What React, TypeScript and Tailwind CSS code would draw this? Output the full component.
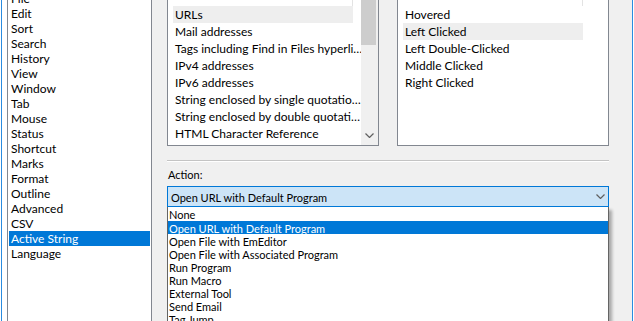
const sections = [
  'File',
  'Edit',
  'Sort',
  'Search',
  'History',
  'View',
  'Window',
  'Tab',
  'Mouse',
  'Status',
  'Shortcut',
  'Marks',
  'Format',
  'Outline',
  'Advanced',
  'CSV',
  'Active String',
  'Language',
];

const kinds = [
  'URLs',
  'Mail addresses',
  'Tags including Find in Files hyperli…',
  'IPv4 addresses',
  'IPv6 addresses',
  'String enclosed by single quotatio…',
  'String enclosed by double quotati…',
  'HTML Character Reference',
];

const events = ['Hovered', 'Left Clicked', 'Left Double-Clicked', 'Middle Clicked', 'Right Clicked'];

const actions = [
  'None',
  'Open URL with Default Program',
  'Open File with EmEditor',
  'Open File with Associated Program',
  'Run Program',
  'Run Macro',
  'External Tool',
  'Send Email',
  'Tag Jump',
];

function Chevron({ className }: { className?: string }) {
  return (
    <svg width="9" height="5" viewBox="0 0 9 5" className={className}>
      <path d="M0.5 0.5 L4.5 4.5 L8.5 0.5" fill="none" stroke="#606060" strokeWidth="1.2" />
    </svg>
  );
}

export default function App() {
  return (
    <div className="flex h-[321px] w-[634px] overflow-hidden bg-[#f0f0f0] font-['Lato',sans-serif] text-[12px] leading-none text-black">
      <div className="w-px bg-white" />
      <div className="w-px bg-[#2a8ce0]" />
      <div className="w-[5px] bg-white" />

      {/* category list */}
      <div className="w-[145px] border-x border-[#828790] bg-white px-px">
        <ul className="mt-[-9px]">
          {sections.map((s) => (
            <li
              key={s}
              className={`flex h-[15px] items-center pl-[2px] pt-px ${s === 'Active String' ? 'bg-[#0078d7] text-white' : ''}`}>
              {s}
            </li>
          ))}
        </ul>
      </div>

      <div className="w-[15px]" />

      <div className="flex w-[442px] flex-col">
        <div className="flex h-[146px] shrink-0 gap-[18px]">
          <div className="flex w-[212px] border-x border-b border-[#828790] bg-white pl-[5px]">
            <ul className="w-[180px]">
              <li className="h-[6px] border-r border-[#e3e3e3]" />
              {kinds.map((k) => (
                <li
                  key={k}
                  className={`flex h-[17px] items-center whitespace-nowrap pl-[2px] pt-px ${k === 'URLs' ? 'bg-[#eeeeee]' : ''}`}>
                  {k}
                </li>
              ))}
            </ul>
            <div className="w-[8px]" />
            <div className="flex w-[17px] flex-col bg-[#f0f0f0]">
              <div className="h-[45px] w-[15px] bg-[#cdcdcd]" />
              <div className="flex-1" />
              <div className="flex h-[17px] items-center justify-center pb-[3px]">
                <Chevron />
              </div>
            </div>
          </div>

          <div className="w-[212px] border-x border-b border-[#828790] bg-white pl-[5px]">
            <ul className="w-[180px]">
              <li className="h-[6px] border-r border-[#e3e3e3]" />
              {events.map((e) => (
                <li
                  key={e}
                  className={`flex h-[17px] items-center pl-[2px] pt-px ${e === 'Left Clicked' ? 'bg-[#eeeeee]' : ''}`}>
                  {e}
                </li>
              ))}
            </ul>
          </div>
        </div>

        <div className="h-[14px] shrink-0" />
        <div className="h-px shrink-0 bg-[#c4c4c4]" />
        <div className="h-px shrink-0 bg-white" />

        <div className="flex h-[24px] shrink-0 items-center pl-px pt-px text-[11px]">Action:</div>

        <div className="flex h-[21px] shrink-0 items-center justify-between border border-[#0078d7] bg-[#cce4f7] pl-[3px] pr-[3px] text-[11px]">
          <span className="pt-px">Open URL with Default Program</span>
          <Chevron />
        </div>

        <ul className="relative shrink-0 border-x border-[#646464] bg-white text-[11px] shadow-[3px_3px_3px_rgba(0,0,0,0.3)]">
          {actions.map((a, i) => (
            <li
              key={a}
              className={`flex items-center pl-[1px] pt-px ${i === 0 ? 'h-[14px]' : 'h-[13px]'} ${i === 1 ? 'bg-[#0078d7] text-white' : ''}`}>
              {a}
            </li>
          ))}
        </ul>
      </div>

      <div className="w-[23px]" />
      <div className="w-px bg-[#2a8ce0]" />
      <div className="w-px bg-white" />
    </div>
  );
}
